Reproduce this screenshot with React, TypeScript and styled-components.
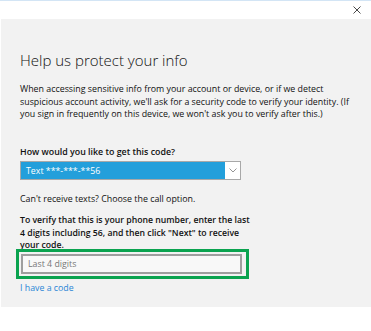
import React from "react";
import styled, { createGlobalStyle } from "styled-components";

const Global = createGlobalStyle`
  html, body { margin: 0; padding: 0; background: #ffffff; }
  body { font-family: "Open Sans", "Noto Sans", sans-serif; color: #000; }
`;

const Window = styled.div`
  width: 371px;
  height: 331px;
  display: flex;
  flex-direction: column;
  background: #ffffff;
  border-top: 1px solid #d3e5f5;
  box-sizing: border-box;
`;

const TitleBar = styled.div`
  height: 18px;
  display: flex;
  align-items: center;
  justify-content: flex-end;
  padding-right: 7px;
`;

const CloseButton = styled.button`
  width: 14px;
  height: 14px;
  border: none;
  background: transparent;
  padding: 0;
  display: flex;
  align-items: center;
  justify-content: center;
  color: #333;
`;

const Panel = styled.div`
  margin-left: 1px;
  height: 288px;
  background: #f2f2f2;
  padding: 0 0 0 19px;
  box-sizing: border-box;
  display: flex;
  flex-direction: column;
`;

const Title = styled.h1`
  margin: 31px 0 0;
  font-size: 15px;
  font-weight: 300;
  line-height: 20px;
  color: #111;
`;

const Paragraph = styled.p<{ $bold?: boolean; $size?: number }>`
  margin: 0;
  font-size: ${(p) => p.$size ?? 8.85}px;
  line-height: 12.6px;
  font-weight: ${(p) => (p.$bold ? 600 : 400)};
  color: #111;
`;

const Intro = styled(Paragraph)`
  margin-top: 13px;
  width: 340px;
`;

const Label = styled(Paragraph)`
  margin-top: 25px;
`;

const Select = styled.div`
  margin-top: 3px;
  width: 221px;
  height: 19px;
  box-sizing: border-box;
  border: 1px solid #a8a8a8;
  display: flex;
  background: #ffffff;
`;

const SelectValue = styled.div`
  flex: 1;
  background: #239fdb;
  color: #fff;
  font-size: 8.8px;
  display: flex;
  align-items: center;
  padding-left: 5px;
`;

const SelectArrow = styled.div`
  width: 15px;
  display: flex;
  align-items: center;
  justify-content: center;
`;

const Hint = styled(Paragraph)`
  margin-top: 13px;
`;

const Instructions = styled(Paragraph)`
  margin-top: 8px;
  width: 232px;
`;

const Highlight = styled.div`
  margin: -3px 0 0 -4px;
  width: 233px;
  height: 30px;
  box-sizing: border-box;
  border: 3px solid #0aa34f;
  padding: 2px 4px 2px 2px;
  display: flex;
`;

const Input = styled.input`
  flex: 1;
  min-width: 0;
  box-sizing: border-box;
  border: 2px solid #9e9e9e;
  background: #f8f8f8;
  font-family: "Open Sans", "Noto Sans", sans-serif;
  font-size: 8.8px;
  padding: 0 0 0 5px;
  outline: none;
  &::placeholder { color: #777; }
`;

const Link = styled.a`
  margin-top: 3px;
  font-size: 8.8px;
  line-height: 12px;
  color: #2a86d6;
  text-decoration: none;
  align-self: flex-start;
`;

export default function App() {
  return (
    <>
      <Global />
      <Window>
        <TitleBar>
          <CloseButton aria-label="Close">
            <svg width="8" height="8" viewBox="0 0 8 8">
              <path d="M0.5 0.5 L7.5 7.5 M7.5 0.5 L0.5 7.5" stroke="#333" strokeWidth="0.9" fill="none" />
            </svg>
          </CloseButton>
        </TitleBar>
        <Panel>
          <Title>Help us protect your info</Title>
          <Intro>
            When accessing sensitive info from your account or device, or if we detect suspicious account
            activity, we'll ask for a security code to verify your identity. (If you sign in frequently on
            this device, we won't ask you to verify after this.)
          </Intro>
          <Label $bold>How would you like to get this code?</Label>
          <Select>
            <SelectValue>Text ***-***-**56</SelectValue>
            <SelectArrow>
              <svg width="8" height="5" viewBox="0 0 8 5">
                <path d="M0.5 0.5 L4 4 L7.5 0.5" stroke="#888" strokeWidth="0.9" fill="none" />
              </svg>
            </SelectArrow>
          </Select>
          <Hint>Can't receive texts? Choose the call option.</Hint>
          <Instructions $bold $size={8.7}>
            To verify that this is your phone number, enter the last 4 digits including 56, and then click
            "Next" to receive your code.
          </Instructions>
          <Highlight>
            <Input placeholder="Last 4 digits" />
          </Highlight>
          <Link href="#">I have a code</Link>
        </Panel>
      </Window>
    </>
  );
}
